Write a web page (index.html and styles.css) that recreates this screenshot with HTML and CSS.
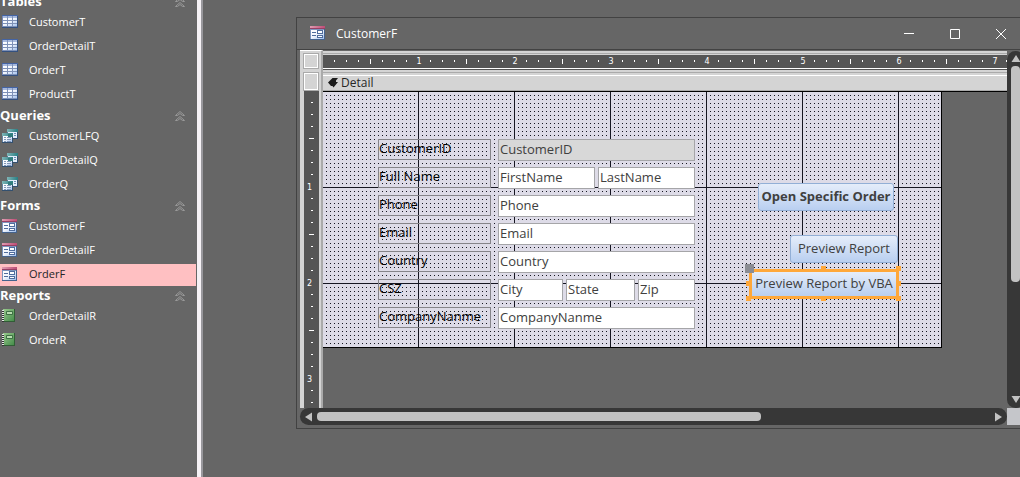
FILE: index.html
```html
<!DOCTYPE html>
<html lang="en">
<head>
<meta charset="utf-8">
<title>CustomerF</title>
<link rel="stylesheet" href="styles.css">
</head>
<body>
<svg class="sprites" aria-hidden="true">
  <defs>
    <linearGradient id="blue" x1="0" y1="0" x2="1" y2="1"><stop offset="0" stop-color="#fff"/><stop offset=".45" stop-color="#f2f6fd"/><stop offset="1" stop-color="#9dbdec"/></linearGradient>
    <linearGradient id="green" x1="0" y1="0" x2="1" y2="1"><stop offset="0" stop-color="#9aca8e"/><stop offset="1" stop-color="#3d8744"/></linearGradient>
    <linearGradient id="pink" x1="0" y1="0" x2="1" y2="0"><stop offset="0" stop-color="#df9cb1"/><stop offset="1" stop-color="#bd4c75"/></linearGradient>
    <linearGradient id="teal" x1="0" y1="0" x2="1" y2="0"><stop offset="0" stop-color="#7fb5b7"/><stop offset="1" stop-color="#287e83"/></linearGradient>
    <symbol id="table" viewBox="0 0 16 16">
      <path fill="#7589b9" d="M0 1h16v13H0z"/><path fill="#4464a4" d="M0 1h16v1H0z"/><path fill="#a6b9de" d="M1 2h14v2H1z"/><path fill="url(#blue)" d="M1 4h14v9H1z"/>
      <path fill="#7e91b7" d="M5 2h1v11H5zM10 2h1v11h-1zM1 6h14v1H1zM1 9h14v1H1zM1 12h14v1H1z"/><path fill="#34517f" d="M15 2h1v12h-1zM0 13h16v1H0z"/>
    </symbol>
    <symbol id="query" viewBox="0 0 16 16">
      <path fill="#5b7796" d="M5 1h11v10H5z"/><path fill="#e4eefc" d="M6 4h9v6H6z"/><path fill="url(#teal)" d="M5 1h11v3H5z"/><path fill="#6e90b5" d="M12 5h2v1h-2zM12 7h2v1h-2z"/><path fill="#33506f" d="M15 4h1v7H5v-1h10z"/>
      <path fill="#6484a4" d="M0 6h11v9H0z"/><path fill="url(#blue)" d="M1 8h9v6H1z"/><path fill="url(#teal)" d="M0 5h11v3H0z"/><path fill="#8197b7" d="M2 9h2v1H2zM5 9h4v1H5zM2 11h2v1H2zM5 11h4v1H5zM2 13h2v1H2zM5 13h4v1H5z"/><path fill="#33506f" d="M10 8h1v7H0v-1h10z"/><path fill="#317c7c" d="M6 6h5v3H6z"/>
    </symbol>
    <symbol id="form" viewBox="0 0 16 16">
      <path fill="#7d94bc" d="M0 1h15v14H0z"/><path fill="url(#blue)" d="M1 5h13v9H1z"/><path fill="url(#pink)" d="M0 1h15v3H0z"/><path fill="#983f64" d="M0 3h15v1H0z"/><path fill="#506d9d" d="M2 7h4v1H2zM2 10h4v1H2zM7 5h6v4H7zM7 10h6v3H7z"/><path fill="#fff" d="M8 6h4v2H8zM8 11h4v1H8z"/><path fill="#45638d" d="M14 4h1v11H0v-1h14z"/>
    </symbol>
    <symbol id="report" viewBox="0 0 16 16">
      <path fill="url(#green)" d="M1 1h12v13H1z"/><path fill="#315d36" d="M12 1h1v13H1v-1h11z"/><path fill="none" stroke="#3e7144" d="M4.500 3.500h6v3h-6z"/><path fill="#b9ddb0" d="M5 4h5v2H5z"/><path stroke="#e4e8e4" stroke-width="2" stroke-dasharray="1 1" d="M1 2v12"/><path stroke="#333" stroke-width="2" stroke-dasharray="1 1" d="M1 3v11"/>
    </symbol>
    <symbol id="collapse" viewBox="0 0 10 10">
      <path fill="none" stroke="#999" stroke-width="1" d="M.5 4.500 5 .5l4.500 4M2.500 4.500 5 2.500l2.500 2M.5 9.500 5 5.500l4.500 4M2.500 9.500 5 7.500l2.500 2M.5 4.500h2M7.500 4.500h2M.5 9.500h2M7.500 9.500h2"/>
    </symbol>
  </defs>
</svg>
<div class="app">
  <nav class="nav" aria-label="Database objects">
    <h2 class="group">Tables<button class="toggle" aria-label="Collapse Tables"><svg><use href="#collapse"/></svg></button></h2>
    <ul class="items">
      <li><a href="#" class="item"><svg><use href="#table"/></svg><span>CustomerT</span></a></li>
      <li><a href="#" class="item"><svg><use href="#table"/></svg><span>OrderDetailT</span></a></li>
      <li><a href="#" class="item"><svg><use href="#table"/></svg><span>OrderT</span></a></li>
      <li><a href="#" class="item"><svg><use href="#table"/></svg><span>ProductT</span></a></li>
    </ul>
    <h2 class="group">Queries<button class="toggle" aria-label="Collapse Queries"><svg><use href="#collapse"/></svg></button></h2>
    <ul class="items">
      <li><a href="#" class="item"><svg><use href="#query"/></svg><span>CustomerLFQ</span></a></li>
      <li><a href="#" class="item"><svg><use href="#query"/></svg><span>OrderDetailQ</span></a></li>
      <li><a href="#" class="item"><svg><use href="#query"/></svg><span>OrderQ</span></a></li>
    </ul>
    <h2 class="group">Forms<button class="toggle" aria-label="Collapse Forms"><svg><use href="#collapse"/></svg></button></h2>
    <ul class="items">
      <li><a href="#" class="item"><svg><use href="#form"/></svg><span>CustomerF</span></a></li>
      <li><a href="#" class="item"><svg><use href="#form"/></svg><span>OrderDetailF</span></a></li>
      <li><a href="#" class="item selected"><svg><use href="#form"/></svg><span>OrderF</span></a></li>
    </ul>
    <h2 class="group">Reports<button class="toggle" aria-label="Collapse Reports"><svg><use href="#collapse"/></svg></button></h2>
    <ul class="items">
      <li><a href="#" class="item"><svg><use href="#report"/></svg><span>OrderDetailR</span></a></li>
      <li><a href="#" class="item"><svg><use href="#report"/></svg><span>OrderR</span></a></li>
    </ul>
  </nav>
  <main class="workspace">
    <section class="window">
      <header class="titlebar">
        <svg class="title-icon"><use href="#form"/></svg>
        <h1 class="title">CustomerF</h1>
        <button class="caption" aria-label="Minimize"><svg viewBox="0 0 10 10"><path d="M0 4.500h10"/></svg></button>
        <button class="caption" aria-label="Maximize"><svg viewBox="0 0 10 10"><path d="M.5.5h9v9h-9z"/></svg></button>
        <button class="caption" aria-label="Close"><svg viewBox="0 0 10 10"><path d="m0 0 10 10M10 0 0 10"/></svg></button>
      </header>
      <div class="editor">
        <div class="left-strip">
          <button class="selector form-selector" aria-label="Select form"></button>
          <button class="selector section-selector" aria-label="Select section"></button>
          <div class="v-ruler"><span>1</span><span>2</span><span>3</span></div>
        </div>
        <div class="design">
          <div class="h-ruler"><span>1</span><span>2</span><span>3</span><span>4</span><span>5</span><span>6</span><span>7</span></div>
          <div class="section-bar"><svg viewBox="0 0 10 10"><path fill="#1c1c1c" d="M0 4.500 3 1.500 4.500 0H10L8 2.500V4h2L5.500 9.500 4.500 8H3z"/></svg>Detail</div>
          <div class="canvas">
            <form class="fields">
              <label for="cid">CustomerID</label><div class="boxes"><input id="cid" class="locked" value="CustomerID" readonly></div>
              <label for="first">Full Name</label><div class="boxes"><input id="first" value="FirstName"><input aria-label="Last name" value="LastName"></div>
              <label for="phone">Phone</label><div class="boxes"><input id="phone" value="Phone"></div>
              <label for="email">Email</label><div class="boxes"><input id="email" value="Email"></div>
              <label for="country">Country</label><div class="boxes"><input id="country" value="Country"></div>
              <label for="city">CSZ</label><div class="boxes address"><input id="city" value="City"><input aria-label="State" value="State"><input aria-label="Zip" value="Zip"></div>
              <label for="company">CompanyNanme</label><div class="boxes"><input id="company" value="CompanyNanme"></div>
            </form>
            <button class="command open-order">Open Specific Order</button>
            <button class="command preview">Preview Report</button>
            <div class="selection">
              <button class="command chosen">Preview Report by VBA</button>
              <i class="handle move"></i><i class="handle n"></i><i class="handle ne"></i><i class="handle w"></i><i class="handle e"></i><i class="handle sw"></i><i class="handle s"></i><i class="handle se"></i>
            </div>
          </div>
        </div>
        <div class="v-scroll">
          <svg viewBox="0 0 10 7"><path d="M5 0 9.500 7h-9z"/></svg>
          <div class="v-thumb"></div>
          <svg viewBox="0 0 10 7"><path d="M.5 0h9L5 7z"/></svg>
        </div>
        <div class="h-scroll">
          <svg viewBox="0 0 7 10"><path d="M0 5 7 .5v9z"/></svg>
          <div class="h-track"><div class="h-thumb"></div></div>
          <svg viewBox="0 0 7 10"><path d="M7 5 0 .5v9z"/></svg>
        </div>
        <div class="corner"></div>
      </div>
    </section>
  </main>
</div>
</body>
</html>
```
FILE: styles.css
```css
* { box-sizing: border-box; }
body { margin: 0; background: #666; color: #fff; font-family: "Open Sans", "Noto Sans", sans-serif; font-size: 11px; }
button, input { font: inherit; margin: 0; padding: 0; }
button { border: 0; background: none; color: inherit; }
ul, h1, h2 { margin: 0; padding: 0; list-style: none; }
svg { display: block; flex: none; }
.sprites { position: absolute; width: 0; height: 0; }
.app { display: flex; height: 100vh; overflow: hidden; }

.nav { flex: none; width: 203px; margin-top: -7px; border-right: 2px solid #99989d; box-shadow: inset -4px 0 #f5f1f5; padding-right: 5px; }
.group { display: flex; align-items: center; justify-content: space-between; height: 18px; padding-right: 11px; font-size: 13px; line-height: 16px; font-weight: 700; padding-bottom: 2px; }
.toggle { padding-top: 2px; }
.toggle svg { width: 10px; height: 10px; }
.item { display: flex; align-items: center; gap: 11px; height: 24px; padding-left: 2px; color: #fff; text-decoration: none; }
.item svg { width: 16px; height: 16px; margin-bottom: 2px; }
.item span { line-height: 16px; padding-bottom: 2px; }
.selected { color: #262626; background: linear-gradient(#ffc0c2, #ffc0c2) 0 1px / 100% 22px no-repeat; }

.workspace { flex: 1; display: flex; min-width: 0; padding: 17px 0 48px 93px; }
.window { flex: 1; display: flex; flex-direction: column; min-width: 0; margin-right: -8px; border: 1px solid #424242; padding: 0 3px 3px; }
.titlebar { display: flex; align-items: center; height: 32px; padding-left: 10px; margin: 0 -3px; border-bottom: 1px solid #424242; }
.title-icon { width: 16px; height: 16px; margin: 0 0 1px 3px; }
.title { flex: 1; margin-left: 10px; font-size: 12px; font-weight: 400; }
.caption { display: grid; place-items: center; width: 46px; height: 31px; }
.caption:last-child { margin-right: 3px; }
.caption svg { width: 10px; height: 10px; overflow: visible; fill: none; stroke: #fff; stroke-width: 1px; }

.editor { flex: 1; display: grid; grid-template: 1fr 17px / 23px 1fr 17px; min-height: 0; }
.left-strip { display: flex; flex-direction: column; background: #d4d4d4; border-top: 1px solid #fff; border-right: 2px solid #aaa; padding: 2px 2px 0 3px; overflow: hidden; }
.selector { flex: none; background: #d4d4d4; border: 1px solid #aaa; box-shadow: inset 1px 1px #fff, inset -1px -1px #fff; }
.form-selector { height: 16px; }
.section-selector { height: 19px; margin-top: 3px; }
.v-ruler { flex: 1; display: flex; flex-direction: column; padding-top: 49px; overflow: hidden; margin-left: 1px; background: linear-gradient(#fff, #fff) 5px 47px / 5px 1px no-repeat, linear-gradient(#fff, #fff) 5px 143px / 5px 1px no-repeat, linear-gradient(#fff, #fff) 5px 239px / 5px 1px no-repeat, linear-gradient(90deg, #555 7px, transparent 7px 9px, #555 9px), repeating-linear-gradient(#555 0 11px, #fff 11px 12px); }
.v-ruler span, .h-ruler span { display: flex; flex: none; align-items: center; justify-content: center; font: 8px/10px "DejaVu Sans", sans-serif; }
.v-ruler span { height: 96px; width: 11px; background: linear-gradient(#555, #555) center / 11px 8px no-repeat; }
.design { display: flex; flex-direction: column; min-width: 0; overflow: hidden; background: linear-gradient(transparent 1px, #d4d4d4 1px 3px, #aaa 3px 4px, #d4d4d4 4px 5px, transparent 5px); }
.h-ruler { flex: none; display: flex; height: 14px; margin-top: 5px; border-bottom: 1px solid #fff; padding-left: 48px; overflow: hidden; background: repeating-linear-gradient(90deg, transparent 0 47px, #fff 47px 48px, transparent 48px 96px) 0 4px / 100% 5px no-repeat, repeating-linear-gradient(90deg, transparent 0 11px, #fff 11px 12px) 0 5px / 100% 2px no-repeat, #555; }
.h-ruler span { width: 96px; background: linear-gradient(#555, #555) center / 8px 10px no-repeat; }
.section-bar { flex: none; display: flex; align-items: center; gap: 3px; height: 23px; padding: 5px 0 0 5px; border-top: 1px solid #555; border-bottom: 1px solid #000; background: linear-gradient(#d4d4d4 2px, #aaa 2px 3px, #d4d4d4 3px 5px, #fff 5px 6px, #d4d4d4 6px 20px, #aaa 20px); color: #262626; font-size: 12px; line-height: 14px; }
.section-bar svg { width: 10px; height: 10px; }

.canvas { position: relative; flex: none; width: 619px; padding: 47px 0 18px 55px; border-right: 1px solid #000; border-bottom: 1px solid #000; background: repeating-linear-gradient(90deg, transparent 0 95px, #151520 95px 96px), repeating-linear-gradient(transparent 0 95px, #151520 95px 96px), repeating-linear-gradient(90deg, #dddbe7 0 3px, transparent 3px 4px), repeating-linear-gradient(#dddbe7 0 3px, #151520 3px 4px); }
.fields { display: grid; grid-template-columns: 113px 197px; column-gap: 7px; row-gap: 6px; font-size: 13px; }
.fields label { height: 21px; border: 1px solid #858489; color: #000; line-height: 17px; white-space: nowrap; }
.boxes { display: grid; grid-auto-flow: column; grid-auto-columns: 1fr; gap: 3px; height: 22px; }
.address { grid-template-columns: 65px 69px 57px; }
.boxes input { width: 100%; min-width: 0; height: 22px; padding: 0 0 2px 1px; border: 1px solid #a5a5a8; border-radius: 0; background: #fff; color: #404040; line-height: 18px; }
.boxes .locked { background: #d8d8d8; }
.command { height: 28px; padding-bottom: 2px; border: 1px solid #92afd6; border-radius: 3px; background: linear-gradient(#e5edfa, #b9cff0); color: #404040; font-size: 13px; line-height: 22px; white-space: nowrap; }
.open-order { position: absolute; left: 435px; top: 91px; width: 136px; font-weight: 700; }
.preview { position: absolute; left: 467px; top: 143px; width: 108px; }
.selection { position: absolute; left: 426px; top: 177px; width: 150px; height: 30px; border: 3px solid #ffa83a; }
.chosen { display: flex; align-items: center; justify-content: center; width: 100%; height: 24px; border: 0; border-radius: 0; }
.handle { position: absolute; width: 5px; height: 5px; background: #ffa83a; }
.move { left: -7px; top: -8px; width: 9px; height: 9px; background: #8b8d94; }
.n, .ne { top: -6px; }
.w, .e { top: 9px; }
.sw, .s, .se { bottom: -5px; }
.w, .sw { left: -6px; }
.n, .s { left: 69px; }
.ne, .e, .se { right: -5px; }

.v-scroll { display: flex; flex-direction: column; align-items: center; margin-top: 1px; padding: 4px 0 5px; border-radius: 9px; background: #373737; }
.v-scroll svg { width: 10px; height: 7px; fill: #c2c2c2; }
.v-thumb { width: 9px; height: 216px; margin: 4px 0 auto; border-radius: 4px; background: #c2c2c2; }
.h-scroll { grid-column: 1 / 3; display: flex; align-items: center; padding: 0 5px; border-radius: 9px; background: #373737; }
.h-scroll svg { width: 7px; height: 10px; fill: #c2c2c2; }
.h-track { flex: 1; padding: 0 5px; }
.h-thumb { width: 66%; height: 9px; border-radius: 4px; background: #c2c2c2; }
.corner { background: #c5c6ca; }
```
